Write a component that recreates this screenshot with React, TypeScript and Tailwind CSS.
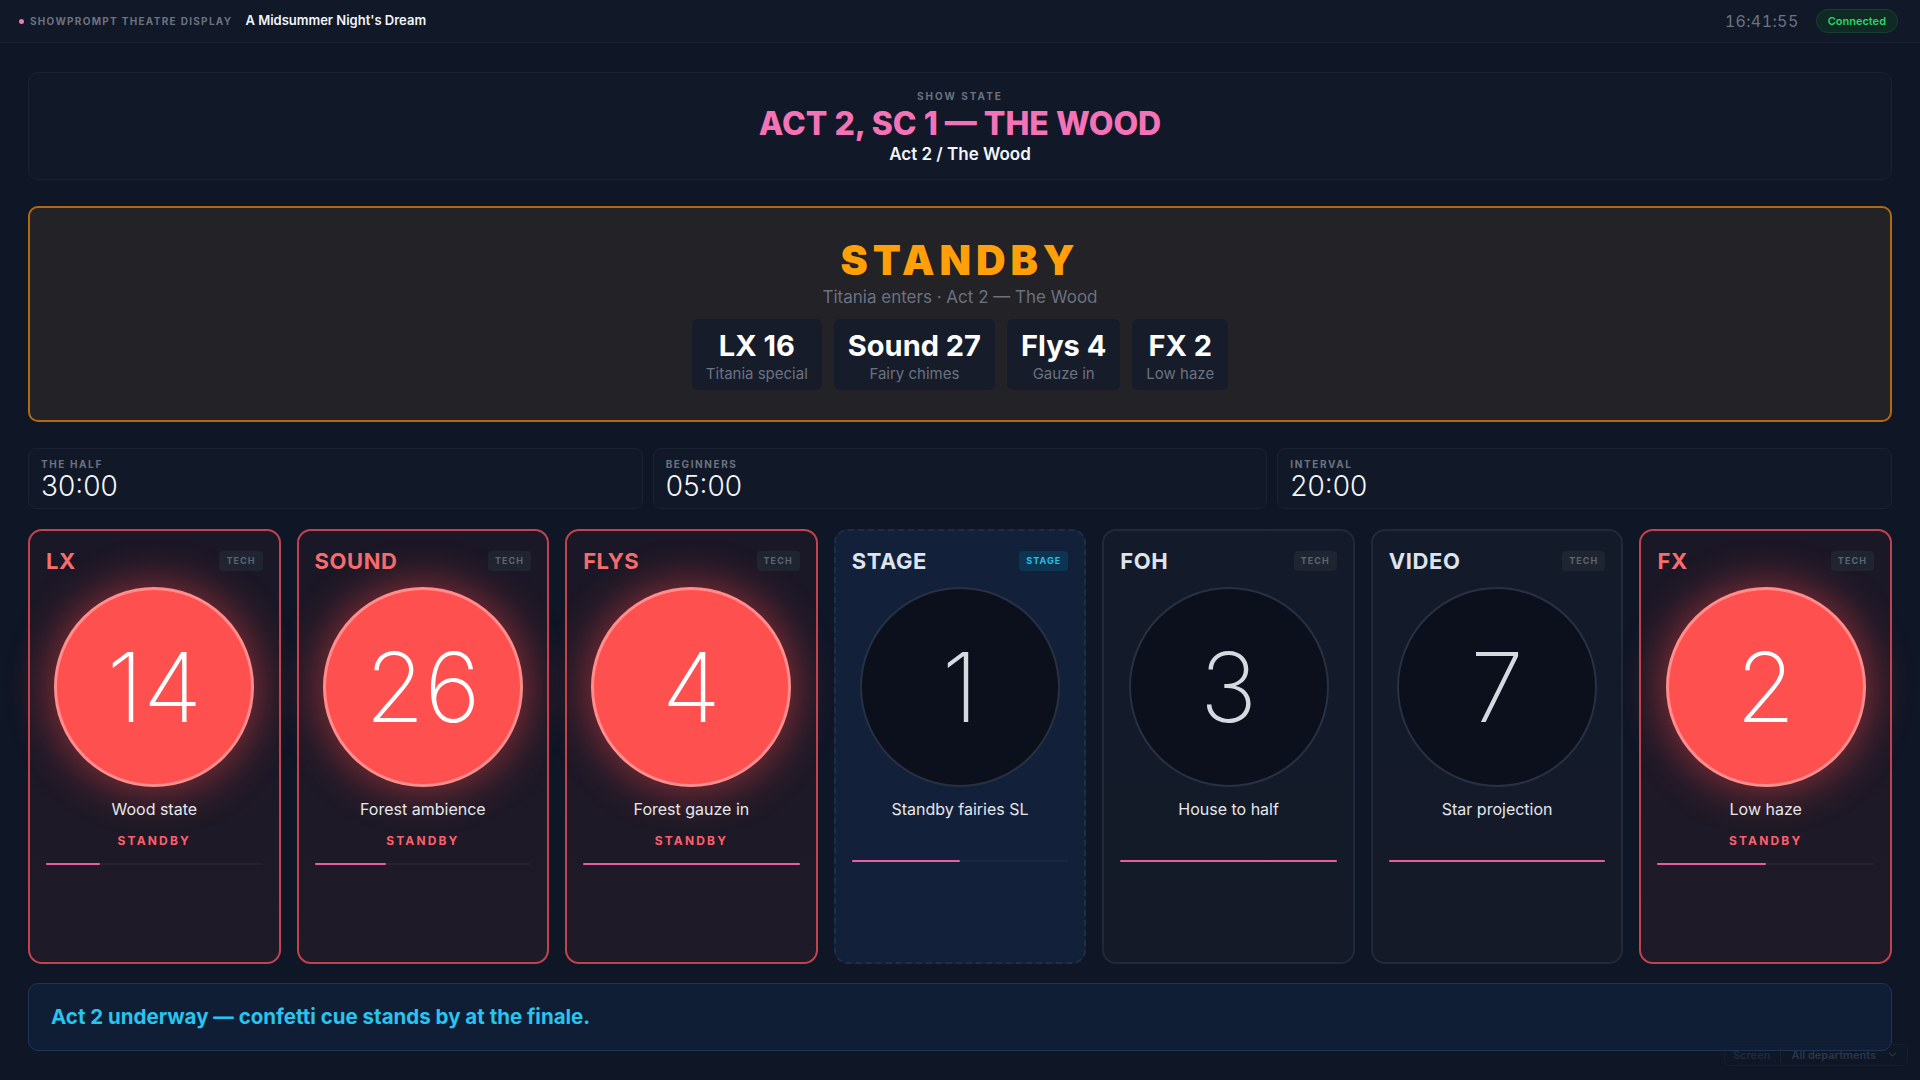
import React from "react";
import { ChevronDown } from "lucide-react";

type Dept = {
  name: string;
  cue: string;
  label: string;
  kind: "standby" | "stage" | "idle";
  progress: number;
};

const depts: Dept[] = [
  { name: "LX", cue: "14", label: "Wood state", kind: "standby", progress: 25 },
  { name: "SOUND", cue: "26", label: "Forest ambience", kind: "standby", progress: 33 },
  { name: "FLYS", cue: "4", label: "Forest gauze in", kind: "standby", progress: 100 },
  { name: "STAGE", cue: "1", label: "Standby fairies SL", kind: "stage", progress: 50 },
  { name: "FOH", cue: "3", label: "House to half", kind: "idle", progress: 100 },
  { name: "VIDEO", cue: "7", label: "Star projection", kind: "idle", progress: 100 },
  { name: "FX", cue: "2", label: "Low haze", kind: "standby", progress: 50 },
];

const cues = [
  { title: "LX 16", sub: "Titania special" },
  { title: "Sound 27", sub: "Fairy chimes" },
  { title: "Flys 4", sub: "Gauze in" },
  { title: "FX 2", sub: "Low haze" },
];

const timers = [
  { label: "THE HALF", value: "30:00" },
  { label: "BEGINNERS", value: "05:00" },
  { label: "INTERVAL", value: "20:00" },
];

function DeptCard({ d }: { d: Dept }) {
  const standby = d.kind === "standby";
  const stage = d.kind === "stage";

  const cardStyle = standby
    ? "border-2 border-[#c2434d] bg-gradient-to-b from-[#1a1726] to-[#1f1a27]"
    : stage
    ? "border-2 border-dashed border-[#1f2d45] bg-[#13203a]"
    : "border-2 border-[#212a3a] bg-gradient-to-b from-[#131a2a] to-[#141a28]";

  return (
    <div className={`h-[435px] rounded-[14px] px-[16px] pt-[15px] flex flex-col ${cardStyle}`}>
      <div className="flex items-center justify-between h-[30px]">
        <span className={`text-[22px] font-bold tracking-wide ${standby ? "text-[#f56d6d]" : "text-[#dfe4ec]"}`}>
          {d.name}
        </span>
        {stage ? (
          <span className="px-[7px] py-[3px] rounded-[4px] bg-[#0b3551] text-[#2cbfe6] text-[9px] font-bold tracking-[0.12em]">STAGE</span>
        ) : (
          <span className="px-[7px] py-[3px] rounded-[4px] bg-[#1f2431] text-[#5d6574] text-[9px] font-bold tracking-[0.12em]">TECH</span>
        )}
      </div>

      <div className="flex justify-center mt-[11px]">
        <div
          className={`w-[200px] h-[200px] rounded-full flex items-center justify-center ${
            standby
              ? "bg-[#ff5050] border-[3px] border-[#ff8d8d] shadow-[0_0_40px_6px_rgba(255,70,70,0.45)]"
              : "bg-[#0b101c] border-2 border-[#283142]"
          }`}
        >
          <span className={`text-[96px] font-extralight leading-none ${standby ? "text-white" : "text-[#d5d9e0]"}`}>{d.cue}</span>
        </div>
      </div>

      <div className="mt-[12px] text-center text-[16px] leading-[20px] text-[#e5e7eb]">{d.label}</div>
      <div className="mt-[14px] h-[16px] flex items-center justify-center">
        {standby && <span className="text-[12px] font-bold tracking-[0.18em] text-[#ff5f6b] leading-[16px]">STANDBY</span>}
      </div>

      <div className={`${standby ? "mt-[14px]" : "mt-[11px]"} h-[2px] bg-[#ffffff0a] rounded-full`}>
        <div className="h-full bg-[#e6609f] rounded-full" style={{ width: `${d.progress}%` }} />
      </div>
    </div>
  );
}

export default function App() {
  return (
    <div
      className="relative min-h-[1080px] w-full bg-[#0f1626] text-white overflow-hidden"
      style={{ fontFamily: "Inter, 'Noto Sans', sans-serif" }}
    >
      {/* Top bar */}
      <div className="h-[43px] flex items-center justify-between pl-[19px] pr-[22px] bg-[#111827] border-b border-[#1b2333]">
        <div className="flex items-center">
          <span className="w-[5px] h-[5px] rounded-full bg-[#f472b6]" />
          <span className="ml-[6px] text-[10px] font-bold tracking-[0.13em] text-[#6b7280]">SHOWPROMPT THEATRE DISPLAY</span>
          <span className="ml-[13px] text-[13px] font-semibold text-[#f1f5f9]">A Midsummer Night's Dream</span>
        </div>
        <div className="flex items-center gap-[17px]">
          <span className="text-[16px] text-[#6b7280] tracking-wide tabular-nums">16:41:55</span>
          <span className="px-[11px] py-[3px] rounded-full bg-[#0e2a22] border border-[#15402f] text-[#2bd46b] text-[11px] font-semibold">
            Connected
          </span>
        </div>
      </div>

      <div className="px-[28px] pt-[29px]">
        {/* Show state */}
        <div className="h-[108px] rounded-[10px] border border-[#1b2333] bg-[#111827] flex flex-col items-center pt-[16px]">
          <span className="text-[10px] font-bold tracking-[0.2em] text-[#6b7280]">SHOW STATE</span>
          <span className="mt-[1px] text-[32px] font-extrabold text-[#f472b6] leading-[38px]">ACT 2, SC 1 — THE WOOD</span>
          <span className="text-[17px] font-semibold text-[#f1f5f9] leading-[22px]">Act 2 / The Wood</span>
        </div>

        {/* Standby */}
        <div className="mt-[26px] h-[216px] rounded-[10px] border-2 border-[#b26a12] bg-[#222227] flex flex-col items-center pt-[26px]">
          <span className="text-[41px] font-black tracking-[0.12em] text-[#ff9f0a] leading-[52px]">STANDBY</span>
          <span className="text-[17px] text-[#6b7280] leading-[22px]">Titania enters · Act 2 — The Wood</span>
          <div className="mt-[11px] flex gap-[12px]">
            {cues.map((c) => (
              <div key={c.title} className="h-[71px] px-[14px] rounded-[6px] bg-[#161c2a] flex flex-col items-center justify-center pt-[3px]">
                <span className="text-[29px] font-bold text-white leading-[33px]">{c.title}</span>
                <span className="mt-[2px] text-[15px] text-[#6b7280] leading-[19px]">{c.sub}</span>
              </div>
            ))}
          </div>
        </div>

        {/* Timers */}
        <div className="mt-[26px] grid grid-cols-3 gap-[10px]">
          {timers.map((t) => (
            <div key={t.label} className="h-[61px] rounded-[8px] border border-[#1b2333] bg-[#111827] px-[12px] pt-[9px]">
              <div className="text-[10px] font-bold tracking-[0.16em] text-[#6b7280] leading-[12px]">{t.label}</div>
              <div className="text-[28px] font-light text-[#f1f5f9] leading-[32px]">{t.value}</div>
            </div>
          ))}
        </div>

        {/* Departments */}
        <div className="mt-[20px] grid grid-cols-7 gap-[16px]">
          {depts.map((d) => (
            <DeptCard key={d.name} d={d} />
          ))}
        </div>

        {/* Footer message */}
        <div className="mt-[19px] h-[68px] rounded-[10px] border border-[#1d3656] bg-[#0f1e34] flex items-center px-[22px]">
          <span className="text-[20.5px] font-bold text-[#29c3ef]">Act 2 underway — confetti cue stands by at the finale.</span>
        </div>
      </div>

      {/* Screen selector overlay */}
      <div className="absolute right-[12px] bottom-[14px] flex items-center gap-[10px] px-[8px] py-[2px] rounded-[6px] border border-[#1a2232] opacity-70">
        <span className="text-[11px] font-semibold text-[#2a3345]">Screen</span>
        <span className="w-px h-[14px] bg-[#1c2434]" />
        <span className="text-[11px] font-semibold text-[#3a4356]">All departments</span>
        <ChevronDown className="w-[13px] h-[13px] text-[#3a4356]" />
      </div>
    </div>
  );
}
